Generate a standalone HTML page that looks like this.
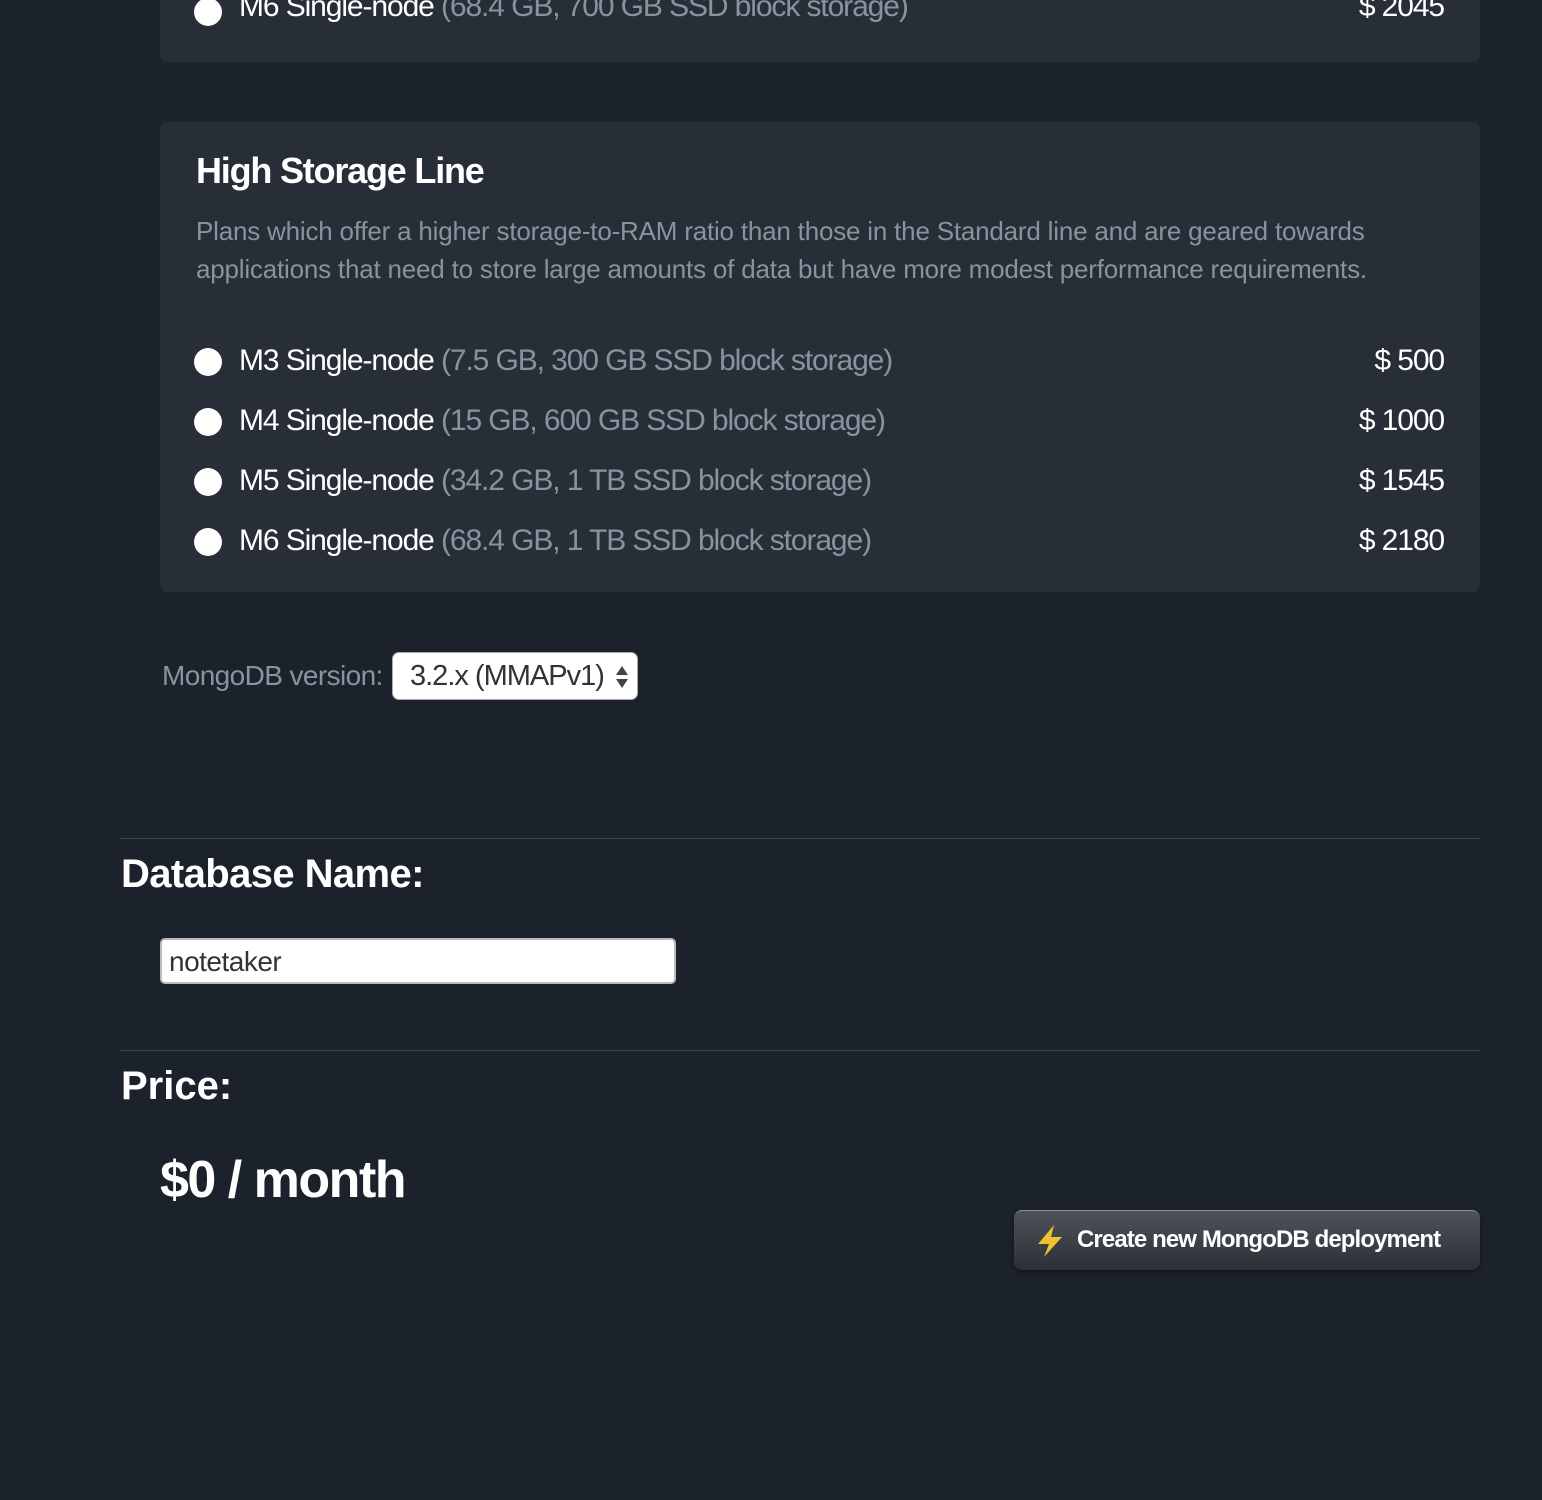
<!DOCTYPE html>
<html><head><meta charset="utf-8"><style>
*{box-sizing:border-box;margin:0;padding:0}
body{width:1542px;height:1500px;background:#1c222c;font-family:"Liberation Sans",sans-serif;color:#fff;position:relative;overflow:hidden}
.card{position:absolute;left:160px;width:1320px;background:#272e38;border-radius:8px}
.row{position:absolute;left:0;width:1320px;height:40px;font-size:30px;letter-spacing:-1.1px}
.radio{position:absolute;left:34px;top:8px;width:28px;height:28px;border-radius:50%;background:#fff}
.lbl{position:absolute;left:79px;top:0;color:#fff}
.lbl span{color:#8a939d}
.price{position:absolute;right:36px;top:0}
.hr{position:absolute;left:120px;width:1360px;height:1px;background:#39414b}
</style></head><body>
<div class="card" style="top:-20px;height:82px">
<div class="row" style="top:10px"><div class="radio"></div><div class="lbl">M6 Single-node <span>(68.4 GB, 700 GB SSD block storage)</span></div><div class="price">$ 2045</div></div>
</div>
<div class="card" style="top:122px;height:470px">
<div style="position:absolute;left:36px;top:28px;font-size:36px;font-weight:bold;letter-spacing:-1.2px">High Storage Line</div>
<div style="position:absolute;left:36px;top:90px;width:1240px;font-size:26px;line-height:38px;color:#8a939d;letter-spacing:-0.2px">Plans which offer a higher storage-to-RAM ratio than those in the Standard line and are geared towards applications that need to store large amounts of data but have more modest performance requirements.</div>
<div class="row" style="top:222px"><div class="radio" style="top:4px"></div><div class="lbl">M3 Single-node <span>(7.5 GB, 300 GB SSD block storage)</span></div><div class="price">$ 500</div></div>
<div class="row" style="top:282px"><div class="radio" style="top:4px"></div><div class="lbl">M4 Single-node <span>(15 GB, 600 GB SSD block storage)</span></div><div class="price">$ 1000</div></div>
<div class="row" style="top:342px"><div class="radio" style="top:4px"></div><div class="lbl">M5 Single-node <span>(34.2 GB, 1 TB SSD block storage)</span></div><div class="price">$ 1545</div></div>
<div class="row" style="top:402px"><div class="radio" style="top:4px"></div><div class="lbl">M6 Single-node <span>(68.4 GB, 1 TB SSD block storage)</span></div><div class="price">$ 2180</div></div>
</div>
<div style="position:absolute;left:162px;top:660px;font-size:28px;color:#8a939d;letter-spacing:-0.6px">MongoDB version:</div>
<div style="position:absolute;left:392px;top:652px;width:246px;height:48px;background:#fff;border:1px solid #aaa;border-radius:7px;font-size:29px;color:#333;padding:7px 0 0 17px;letter-spacing:-1px">3.2.x (MMAPv1)
<svg style="position:absolute;right:8px;top:12px" width="14" height="24"><path d="M7 1L13 10H1Z M7 23L13 14H1Z" fill="#444"/></svg></div>
<div class="hr" style="top:838px"></div>
<div style="position:absolute;left:121px;top:852px;font-size:40px;font-weight:bold;letter-spacing:-0.6px">Database Name:</div>
<div style="position:absolute;left:160px;top:938px;width:516px;height:46px;background:#fff;border:2px solid #bbb;border-radius:5px;font-size:28px;color:#333;padding:6px 0 0 7px;letter-spacing:-0.5px">notetaker</div>
<div class="hr" style="top:1050px"></div>
<div style="position:absolute;left:121px;top:1064px;font-size:40px;font-weight:bold">Price:</div>
<div style="position:absolute;left:160px;top:1150px;font-size:52px;font-weight:bold;letter-spacing:-1.5px">$0 / month</div>
<div style="position:absolute;left:1014px;top:1210px;width:466px;height:60px;border-radius:8px;background:linear-gradient(#4e535a,#2c3036);border-top:1px solid #8c9096;box-shadow:0 2px 4px rgba(0,0,0,.4)">
<svg style="position:absolute;left:20px;top:13px" width="32" height="34" viewBox="0 0 32 34"><path d="M20 1L4 20H15L10 33L28 13H17Z" fill="#f0c030"/></svg>
<div style="position:absolute;left:63px;top:15px;font-size:24px;font-weight:bold;letter-spacing:-0.9px">Create new MongoDB deployment</div>
</div>
</body></html>
